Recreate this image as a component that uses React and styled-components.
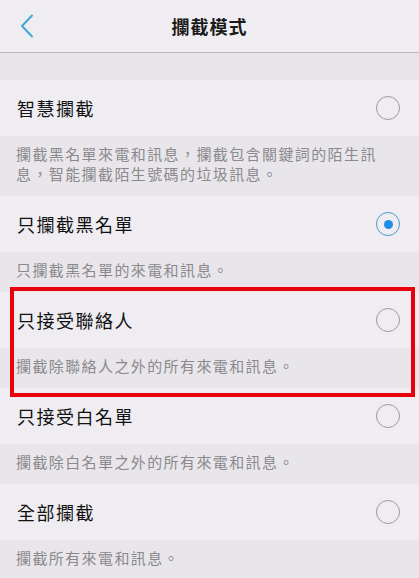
import React, { useState } from "react";
import styled, { createGlobalStyle } from "styled-components";

const GlobalStyle = createGlobalStyle`
  body {
    margin: 0;
    background: #efedf1;
    font-family: "Noto Sans CJK TC", "Noto Sans", sans-serif;
  }
`;

const Screen = styled.div`
  width: 419px;
  height: 578px;
  overflow: hidden;
  background: #efedf1;
`;

const Header = styled.div`
  height: 52px;
  display: flex;
  align-items: center;
  justify-content: center;
  position: relative;
  border-bottom: 1px solid #b9b7bb;
`;

const BackButton = styled.button`
  position: absolute;
  left: 14px;
  top: 12px;
  width: 26px;
  height: 28px;
  padding: 0;
  border: none;
  background: none;
  display: flex;
  align-items: center;
  justify-content: center;
`;

const Title = styled.h1`
  margin: 0;
  font-size: 18px;
  font-weight: 700;
  letter-spacing: 1px;
  color: #1a1a1a;
`;

const Spacer = styled.div`
  height: 27px;
  background: #e7e5e9;
`;

const Group = styled.div`
  position: relative;

  ${(p) =>
    p.$marked &&
    `
    &::after {
      content: "";
      position: absolute;
      top: -5px;
      bottom: -9px;
      left: 10px;
      right: 4px;
      border: 4px solid #e8000b;
      pointer-events: none;
    }
  `}
`;

const Row = styled.div`
  height: 56px;
  display: flex;
  align-items: center;
  justify-content: space-between;
  padding: 0 19px 0 17px;
  cursor: pointer;
`;

const Label = styled.span`
  font-size: 18px;
  letter-spacing: 1.5px;
  color: #111;
`;

const Radio = styled.span`
  width: 24px;
  height: 24px;
  box-sizing: border-box;
  border-radius: 50%;
  border: ${(p) => (p.$on ? "1.5px solid #4a9ccb" : "1px solid #9c9a9e")};
  display: flex;
  align-items: center;
  justify-content: center;

  &::before {
    content: "";
    width: 9px;
    height: 9px;
    border-radius: 50%;
    background: #1f8fe6;
    display: ${(p) => (p.$on ? "block" : "none")};
  }
`;

const Desc = styled.p`
  margin: 0;
  padding: 8px 32px 12px 16px;
  background: #e8e6ea;
  font-size: 15px;
  line-height: 20px;
  letter-spacing: 1.4px;
  color: #8b898d;
`;

const modes = [
  { label: "智慧攔截", desc: "攔截黑名單來電和訊息，攔截包含關鍵詞的陌生訊息，智能攔截陌生號碼的垃圾訊息。" },
  { label: "只攔截黑名單", desc: "只攔截黑名單的來電和訊息。" },
  { label: "只接受聯絡人", desc: "攔截除聯絡人之外的所有來電和訊息。", marked: true },
  { label: "只接受白名單", desc: "攔截除白名單之外的所有來電和訊息。" },
  { label: "全部攔截", desc: "攔截所有來電和訊息。" },
];

const App = () => {
  const [selected, setSelected] = useState(1);

  return (
    <>
      <GlobalStyle />
      <Screen>
        <Header>
          <BackButton aria-label="返回">
            <svg width="14" height="24" viewBox="0 0 14 24" fill="none">
              <path d="M12 1.5L2 12l10 10.5" stroke="#43a6d9" strokeWidth="2" strokeLinecap="round" strokeLinejoin="round" />
            </svg>
          </BackButton>
          <Title>攔截模式</Title>
        </Header>
        <Spacer />
        {modes.map((m, i) => (
          <Group key={m.label} $marked={m.marked}>
            <Row onClick={() => setSelected(i)}>
              <Label>{m.label}</Label>
              <Radio $on={selected === i} />
            </Row>
            <Desc>{m.desc}</Desc>
          </Group>
        ))}
      </Screen>
    </>
  );
};

export default App;
